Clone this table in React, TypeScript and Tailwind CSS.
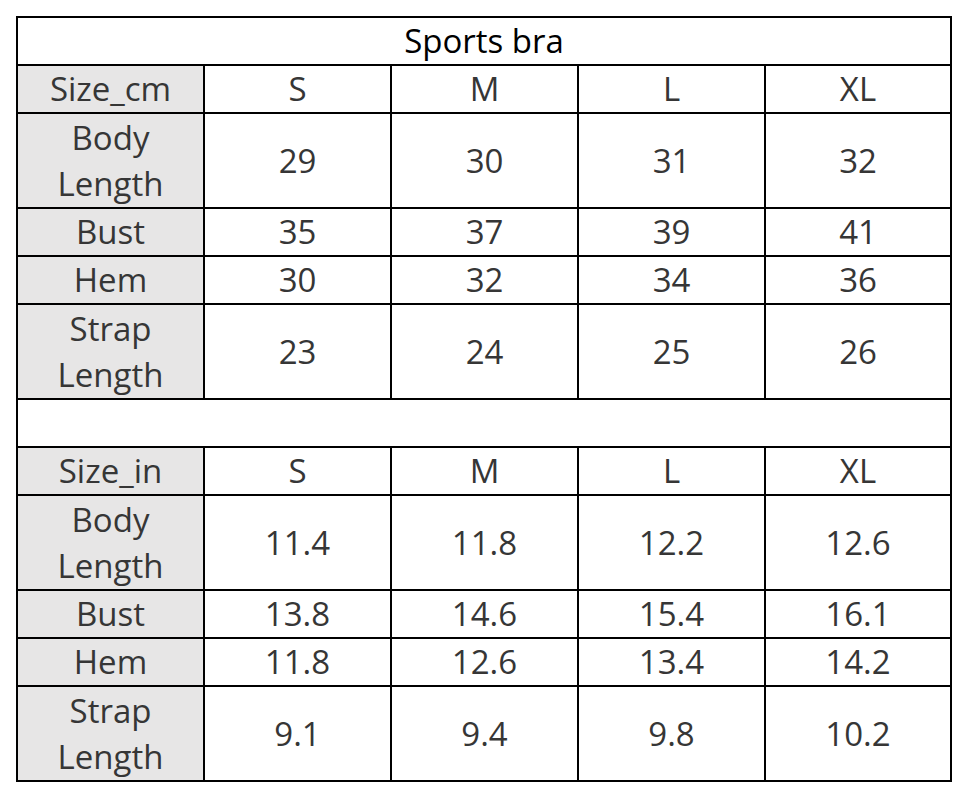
const cm = [
  { label: ["Body", "Length"], values: ["29", "30", "31", "32"], tall: true },
  { label: ["Bust"], values: ["35", "37", "39", "41"] },
  { label: ["Hem"], values: ["30", "32", "34", "36"] },
  { label: ["Strap", "Length"], values: ["23", "24", "25", "26"], tall: true },
];

const inch = [
  { label: ["Body", "Length"], values: ["11.4", "11.8", "12.2", "12.6"], tall: true },
  { label: ["Bust"], values: ["13.8", "14.6", "15.4", "16.1"] },
  { label: ["Hem"], values: ["11.8", "12.6", "13.4", "14.2"] },
  { label: ["Strap", "Length"], values: ["9.1", "9.4", "9.8", "10.2"], tall: true },
];

const sizes = ["S", "M", "L", "XL"];

function Block({ unit, rows }: { unit: string; rows: typeof cm }) {
  return (
    <>
      <div className="h-[46px] bg-[#e7e6e6] flex items-center justify-center">{unit}</div>
      {sizes.map((s) => (
        <div key={s} className="h-[46px] bg-white flex items-center justify-center">
          {s}
        </div>
      ))}
      {rows.map((r) => (
        <Row key={r.label.join(" ")} label={r.label} values={r.values} tall={r.tall} />
      ))}
    </>
  );
}

function Row({ label, values, tall }: { label: string[]; values: string[]; tall?: boolean }) {
  const h = tall ? "h-[93px]" : "h-[46px]";
  return (
    <>
      <div className={`${h} bg-[#e7e6e6] flex flex-col items-center justify-center leading-[46px]`}>
        {label.map((l) => (
          <span key={l}>{l}</span>
        ))}
      </div>
      {values.map((v, i) => (
        <div key={i} className={`${h} bg-white flex items-center justify-center`}>
          {v}
        </div>
      ))}
    </>
  );
}

export default function App() {
  return (
    <div className="w-[970px] h-[800px] bg-white pt-[16px] pl-[16px]">
      <div
        className="w-[936px] grid grid-cols-[185px_185px_185px_185px_184px] gap-[2px] p-[2px] bg-black text-[33px] text-[#363636]"
        style={{ fontFamily: '"Open Sans", "Noto Sans", sans-serif' }}
      >
        <div className="col-span-5 h-[46px] bg-white flex items-center justify-center text-black">
          Sports bra
        </div>
        <Block unit="Size_cm" rows={cm} />
        <div className="col-span-5 h-[46px] bg-white" />
        <Block unit="Size_in" rows={inch} />
      </div>
    </div>
  );
}
